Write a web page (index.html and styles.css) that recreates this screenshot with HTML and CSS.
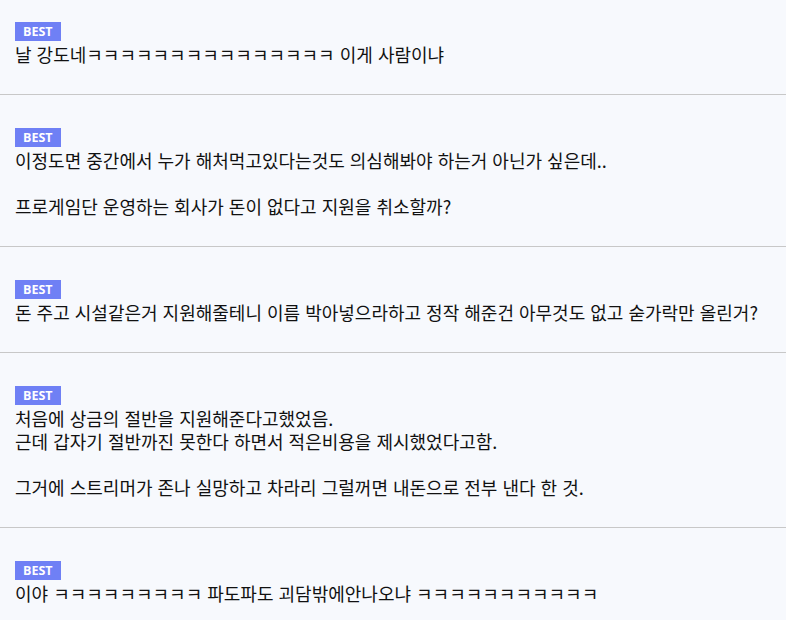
FILE: index.html
```html
<!DOCTYPE html>
<html lang="ko">

<head>
  <meta charset="UTF-8">
  <meta name="viewport" content="width=device-width, initial-scale=1.0">
  <title>베스트 댓글</title>
  <link rel="stylesheet" href="styles.css">
</head>

<body>
  <ul class="comments">
    <li class="item">
      <span class="best">BEST</span>
      <p>날 강도네ㅋㅋㅋㅋㅋㅋㅋㅋㅋㅋㅋㅋㅋㅋㅋ 이게 사람이냐</p>
    </li>
    <li class="item">
      <span class="best">BEST</span>
      <p>이정도면 중간에서 누가 해처먹고있다는것도 의심해봐야 하는거 아닌가 싶은데..<br><br>프로게임단 운영하는 회사가 돈이 없다고 지원을 취소할까?</p>
    </li>
    <li class="item">
      <span class="best">BEST</span>
      <p>돈 주고 시설같은거 지원해줄테니 이름 박아넣으라하고 정작 해준건 아무것도 없고 숟가락만 올린거?</p>
    </li>
    <li class="item">
      <span class="best">BEST</span>
      <p>처음에 상금의 절반을 지원해준다고했었음.<br>근데 갑자기 절반까진 못한다 하면서 적은비용을 제시했었다고함.<br><br>그거에 스트리머가 존나 실망하고 차라리 그럴꺼면 내돈으로 전부 낸다 한 것.</p>
    </li>
    <li class="item">
      <span class="best">BEST</span>
      <p>이야 ㅋㅋㅋㅋㅋㅋㅋㅋㅋ 파도파도 괴담밖에안나오냐 ㅋㅋㅋㅋㅋㅋㅋㅋㅋㅋㅋ</p>
    </li>
  </ul>
</body>

</html>
```

FILE: styles.css
```css
* {
  padding: 0;
  margin: 0;
}

li {
  list-style: none;
}

body {
  background-color: #f7f9fd;
  font-family: "Noto Sans CJK KR", "Noto Sans", sans-serif;
  color: #111;
}

.item {
  padding: 33px 15px 28px;
  border-bottom: 1px solid #c8c8c8;
}

.item:first-child {
  padding-top: 22px;
}

.best {
  display: block;
  width: fit-content;
  height: 19px;
  padding: 0 8px;
  margin-bottom: 2px;
  font: bold 12.5px/19px "Open Sans", "Noto Sans", sans-serif;
  color: #fff;
  background-color: #6f80f5;
}

.item p {
  font-size: 18px;
  line-height: 23px;
}
```
